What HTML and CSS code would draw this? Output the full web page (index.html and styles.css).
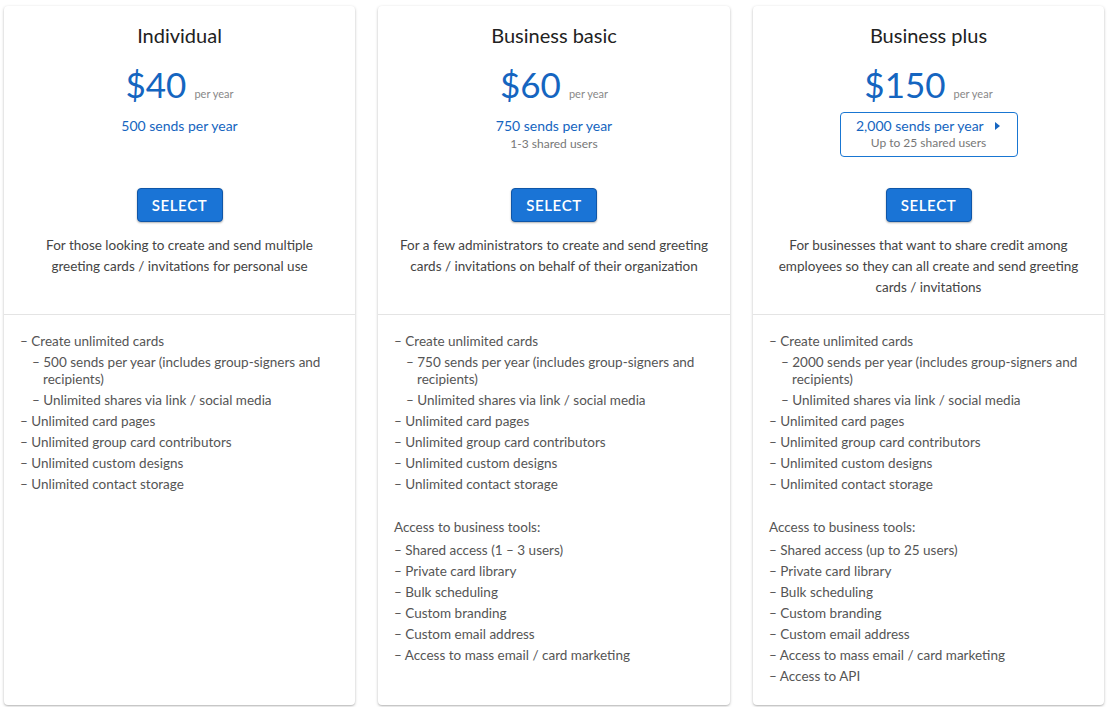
FILE: index.html
```html
<!DOCTYPE html>
<html>
<head>
<meta charset="utf-8">
<link rel="stylesheet" href="styles.css">
</head>
<body>
<div class="plans">
  <div class="card">
    <div class="head">
      <h2 class="title">Individual</h2>
      <div class="price"><span class="amount">$40</span><span class="per">per year</span></div>
      <div class="sends">
        <div class="sends-main">500 sends per year</div>
      </div>
      <button class="select">SELECT</button>
      <p class="desc">For those looking to create and send multiple greeting cards / invitations for personal use</p>
    </div>
    <div class="body">
      <ul class="list">
        <li>– Create unlimited cards</li>
        <li class="sub">– 500 sends per year (includes group-signers and recipients)</li>
        <li class="sub">– Unlimited shares via link / social media</li>
        <li>– Unlimited card pages</li>
        <li>– Unlimited group card contributors</li>
        <li>– Unlimited custom designs</li>
        <li>– Unlimited contact storage</li>
      </ul>
    </div>
  </div>

  <div class="card">
    <div class="head">
      <h2 class="title">Business basic</h2>
      <div class="price"><span class="amount">$60</span><span class="per">per year</span></div>
      <div class="sends">
        <div class="sends-main">750 sends per year</div>
        <div class="sends-sub">1-3 shared users</div>
      </div>
      <button class="select">SELECT</button>
      <p class="desc">For a few administrators to create and send greeting cards / invitations on behalf of their organization</p>
    </div>
    <div class="body">
      <ul class="list">
        <li>– Create unlimited cards</li>
        <li class="sub">– 750 sends per year (includes group-signers and recipients)</li>
        <li class="sub">– Unlimited shares via link / social media</li>
        <li>– Unlimited card pages</li>
        <li>– Unlimited group card contributors</li>
        <li>– Unlimited custom designs</li>
        <li>– Unlimited contact storage</li>
      </ul>
      <p class="tools">Access to business tools:</p>
      <ul class="list">
        <li>– Shared access (1 – 3 users)</li>
        <li>– Private card library</li>
        <li>– Bulk scheduling</li>
        <li>– Custom branding</li>
        <li>– Custom email address</li>
        <li>– Access to mass email / card marketing</li>
      </ul>
    </div>
  </div>

  <div class="card">
    <div class="head">
      <h2 class="title">Business plus</h2>
      <div class="price"><span class="amount">$150</span><span class="per">per year</span></div>
      <div class="sends">
        <div class="sends-box">
          <div class="sends-main">2,000 sends per year <svg class="caret" width="8" height="10" viewBox="0 0 8 10"><path d="M2 1 L7 5 L2 9 Z" fill="#1565c0"/></svg></div>
          <div class="sends-sub">Up to 25 shared users</div>
        </div>
      </div>
      <button class="select">SELECT</button>
      <p class="desc">For businesses that want to share credit among employees so they can all create and send greeting cards / invitations</p>
    </div>
    <div class="body">
      <ul class="list">
        <li>– Create unlimited cards</li>
        <li class="sub">– 2000 sends per year (includes group-signers and recipients)</li>
        <li class="sub">– Unlimited shares via link / social media</li>
        <li>– Unlimited card pages</li>
        <li>– Unlimited group card contributors</li>
        <li>– Unlimited custom designs</li>
        <li>– Unlimited contact storage</li>
      </ul>
      <p class="tools">Access to business tools:</p>
      <ul class="list">
        <li>– Shared access (up to 25 users)</li>
        <li>– Private card library</li>
        <li>– Bulk scheduling</li>
        <li>– Custom branding</li>
        <li>– Custom email address</li>
        <li>– Access to mass email / card marketing</li>
        <li>– Access to API</li>
      </ul>
    </div>
  </div>
</div>
</body>
</html>
```

FILE: styles.css
```css
* { box-sizing: border-box; }
html, body { margin: 0; padding: 0; background: #fff; }
body {
  font-family: "Lato", "Noto Sans", sans-serif;
  color: #555;
  padding: 6px 4px 4px 4px;
}
.plans {
  display: grid;
  grid-template-columns: 351px 352px 351px;
  grid-template-rows: auto 1fr;
  column-gap: 23px;
  height: 697px;
}
.card {
  grid-row: span 2;
  display: grid;
  grid-template-rows: subgrid;
  background: #fff;
  border-radius: 4px;
  box-shadow: 0 1px 3px rgba(0,0,0,0.25), 0 1px 1px rgba(0,0,0,0.08);
}
.head {
  display: flex;
  flex-direction: column;
  align-items: center;
  padding: 17px 20px 16px;
  border-bottom: 1px solid #e4e4e4;
  text-align: center;
}
.title {
  margin: 0;
  font-size: 20px;
  font-weight: 400;
  color: #222;
  line-height: 24px;
}
.price {
  display: flex;
  align-items: baseline;
  margin-top: 17px;
  height: 40px;
}
.amount {
  font-size: 35px;
  color: #1565c0;
  line-height: 40px;
}
.per {
  font-size: 11px;
  color: #888;
  margin-left: 8px;
}
.sends {
  height: 52px;
  margin-top: 10px;
  display: flex;
  flex-direction: column;
  align-items: center;
}
.sends-main {
  font-size: 14px;
  color: #1565c0;
  line-height: 18px;
  margin-top: 3px;
}
.sends-sub {
  font-size: 12px;
  color: #777;
  line-height: 18px;
}
.sends-box {
  border: 1px solid #1976d2;
  border-radius: 4px;
  width: 178px;
  height: 45px;
  padding-top: 2px;
  margin-top: -2px;
}
.sends-box .sends-main { margin-top: 2px; }
.sends-box .sends-sub { line-height: 16px; }
.caret { margin-left: 6px; vertical-align: 0; }
.select {
  margin-top: 22px;
  width: 86px;
  height: 34px;
  background: #1a74d6;
  color: #fff;
  border: 1px solid #0f56a8;
  border-radius: 4px;
  font-family: inherit;
  font-size: 15px;
  font-weight: 600;
  letter-spacing: 0.6px;
  box-shadow: 0 1px 2px rgba(0,0,0,0.3);
}
.desc {
  margin: 13px 0 0;
  font-size: 13.5px;
  line-height: 21px;
  color: #444;
}
.body {
  padding: 18px 16px 16px 16px;
  font-size: 13.5px;
  color: #555;
}
.list {
  list-style: none;
  margin: 0;
  padding: 0;
}
.list li {
  line-height: 17px;
  margin-bottom: 4px;
}
.list li.sub {
  padding-left: 23px;
  text-indent: -11px;
}
.tools {
  margin: 26px 0 6px;
  line-height: 17px;
}
```
